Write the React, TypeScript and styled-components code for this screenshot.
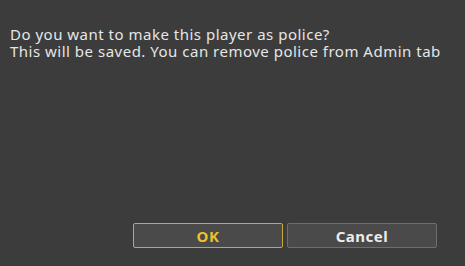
import React from "react";
import styled, { createGlobalStyle } from "styled-components";

const GlobalStyle = createGlobalStyle`
  html, body {
    margin: 0;
    padding: 0;
    background-color: #3c3c3c;
  }
`;

const App = () => {
  return (
    <>
      <GlobalStyle />
      <Dialog>
        <Message>
          <Line>Do you want to make this player as police?</Line>
          <Line>This will be saved. You can remove police from Admin tab</Line>
        </Message>
        <Actions>
          <Button primary>OK</Button>
          <Button>Cancel</Button>
        </Actions>
      </Dialog>
    </>
  );
};

export default App;

const Dialog = styled.div`
  width: 465px;
  height: 266px;
  box-sizing: border-box;
  padding: 26px 28px 18px 10px;
  display: flex;
  flex-direction: column;
  justify-content: space-between;
  background-color: #3c3c3c;
  font-family: "Noto Sans", sans-serif;
`;

const Message = styled.div`
  color: #e6e6e6;
  font-size: 15px;
  letter-spacing: 0.5px;
  white-space: nowrap;
`;

const Line = styled.div`
  line-height: 17px;
`;

const Actions = styled.div`
  display: flex;
  justify-content: flex-end;
  gap: 4px;
`;

const Button = styled.div<{ primary?: boolean }>`
  width: 150px;
  height: 25px;
  box-sizing: border-box;
  display: flex;
  align-items: center;
  justify-content: center;
  background-color: #4a4a4a;
  border: 1px solid ${({ primary }) => (primary ? "#c9a83a" : "#6e6e6e")};
  border-radius: 2px;
  color: ${({ primary }) => (primary ? "#ecc12e" : "#ececec")};
  font-size: 15px;
  font-weight: 700;
  letter-spacing: 0.5px;
`;
